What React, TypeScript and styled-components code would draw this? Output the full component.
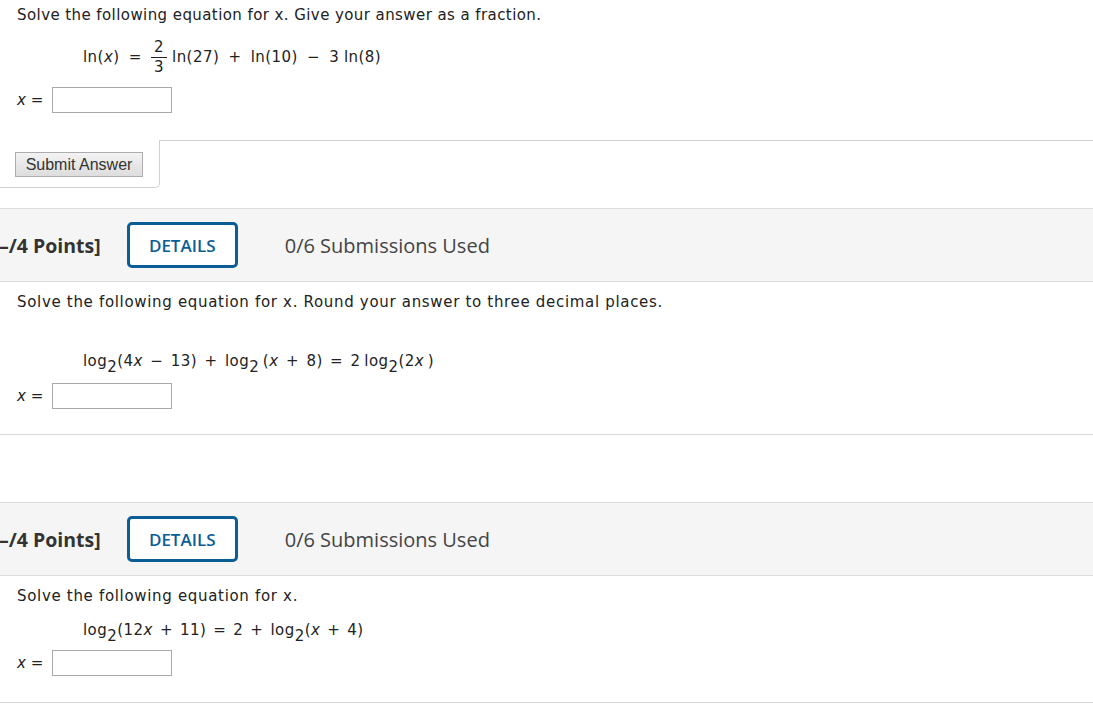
import React from 'react';
import styled, {createGlobalStyle} from "styled-components";

const GlobalStyle = createGlobalStyle`
    body {
        margin: 0;
        background: #fff;
        color: #222;
        font-family: "DejaVu Sans", Verdana, sans-serif;
    }
`;

const Page = styled.div`
    width: 1093px;
    overflow: hidden;
`;

const Question = styled.section<{ top: number, bottom: number, line?: boolean }>`
    padding-top: ${p => p.top}px;
    padding-bottom: ${p => p.bottom}px;
    border-bottom: ${p => p.line ? '1px solid #d6d6d6' : 'none'};
`;

const Prompt = styled.p<{ spacing: number }>`
    margin: 0;
    padding-left: 17px;
    font-size: 15px;
    letter-spacing: ${p => p.spacing}px;
    line-height: 20px;
    color: #222;
    white-space: nowrap;
`;

const Equation = styled.div<{ gap: number, words: number }>`
    display: flex;
    align-items: center;
    height: 40px;
    margin: ${p => p.gap}px 0 0 83px;
    font-size: 15px;
    letter-spacing: 0.45px;
    word-spacing: ${p => p.words}px;
    color: #222;
    white-space: pre;
`;

const Formula = styled.span`
    line-height: 20px;
`;

const Var = styled.i`
    font-style: italic;
`;

const Sub = styled.sub`
    font-size: 15px;
    vertical-align: -6px;
    line-height: 0;
`;

const Fraction = styled.span`
    display: inline-flex;
    flex-direction: column;
    align-items: center;
    vertical-align: middle;
    margin: 0 5px 0 0;
    line-height: 15px;
    font-size: 15px;

    span:first-child {
        border-bottom: 1px solid #222;
        padding: 0 3px 2px;
    }

    span:last-child {
        padding-top: 2px;
    }
`;

const AnswerRow = styled.div<{ gap: number }>`
    display: flex;
    align-items: center;
    margin-top: ${p => p.gap}px;
    padding-left: 17px;
    font-size: 15px;
    color: #222;
`;

const AnswerInput = styled.input`
    box-sizing: border-box;
    width: 120px;
    height: 26px;
    margin-left: 9px;
    border: 1px solid #aaa;
    background: #fff;
    outline: none;
`;

const SubmitArea = styled.div`
    display: flex;
    margin-top: 27px;
`;

const SubmitBox = styled.div`
    box-sizing: border-box;
    width: 160px;
    height: 48px;
    padding: 12px 0 0 15px;
    border-right: 1px solid #d0d0d0;
    border-bottom: 1px solid #d0d0d0;
    border-bottom-right-radius: 5px;
`;

const SubmitFiller = styled.div`
    flex: 1;
    border-top: 1px solid #d0d0d0;
`;

const SubmitButton = styled.button`
    box-sizing: border-box;
    width: 128px;
    height: 25px;
    padding: 0;
    border: 1px solid #adadad;
    background: linear-gradient(#f3f3f3, #dddddd);
    font-family: "Liberation Sans", Arial, sans-serif;
    font-size: 16px;
    color: #333;
`;

const HeaderBand = styled.header<{ top: number }>`
    display: flex;
    align-items: center;
    height: 72px;
    margin-top: ${p => p.top}px;
    background: #f5f5f5;
    border-top: 1px solid #dcdcdc;
    border-bottom: 1px solid #dcdcdc;
    font-family: "Open Sans", sans-serif;
`;

const Points = styled.span`
    margin-left: -1px;
    font-size: 19.5px;
    font-weight: 700;
    color: #333;
    white-space: nowrap;
`;

const DetailsButton = styled.button`
    box-sizing: border-box;
    width: 111px;
    height: 46px;
    margin-left: 26px;
    border: 3px solid #0b5d96;
    border-radius: 5px;
    background: #fff;
    font-family: "Open Sans", sans-serif;
    font-size: 17px;
    font-weight: 600;
    color: #0b5d96;
`;

const Submissions = styled.span`
    margin-left: 47px;
    font-size: 20px;
    color: #444;
`;

const Header = () => (
    <>
        <Points>–/4 Points]</Points>
        <DetailsButton>DETAILS</DetailsButton>
        <Submissions>0/6 Submissions Used</Submissions>
    </>
);

const Answer = ({gap}: { gap: number }) => (
    <AnswerRow gap={gap}>
        <Var>x</Var>&nbsp;=
        <AnswerInput type="text"/>
    </AnswerRow>
);

export default function App() {
    return (
        <Page>
            <GlobalStyle/>
            <Question top={5} bottom={0}>
                <Prompt spacing={0.42}>Solve the following equation for x. Give your answer as a fraction.</Prompt>
                <Equation gap={12} words={-0.6}>
                    <Formula>
                        ln(<Var>x</Var>)  =  <Fraction><span>2</span><span>3</span></Fraction>ln(27)  +  ln(10)  −  3 ln(8)
                    </Formula>
                </Equation>
                <Answer gap={10}/>
                <SubmitArea>
                    <SubmitBox>
                        <SubmitButton>Submit Answer</SubmitButton>
                    </SubmitBox>
                    <SubmitFiller/>
                </SubmitArea>
            </Question>

            <HeaderBand top={20}>
                <Header/>
            </HeaderBand>
            <Question top={10} bottom={25} line>
                <Prompt spacing={0.68}>Solve the following equation for x. Round your answer to three decimal places.</Prompt>
                <Equation gap={29} words={-1.5}>
                    <Formula>
                        log<Sub>2</Sub>(4<Var>x</Var>  −  13)  +  log<Sub>2</Sub> (<Var>x</Var>  +  8)  =  2 log<Sub>2</Sub>(2<Var>x</Var> )
                    </Formula>
                </Equation>
                <Answer gap={2}/>
            </Question>

            <HeaderBand top={67}>
                <Header/>
            </HeaderBand>
            <Question top={10} bottom={26} line>
                <Prompt spacing={0.68}>Solve the following equation for x.</Prompt>
                <Equation gap={4} words={-1.7}>
                    <Formula>
                        log<Sub>2</Sub>(12<Var>x</Var>  +  11)  =  2  +  log<Sub>2</Sub>(<Var>x</Var>  +  4)
                    </Formula>
                </Equation>
                <Answer gap={0}/>
            </Question>
        </Page>
    );
}
